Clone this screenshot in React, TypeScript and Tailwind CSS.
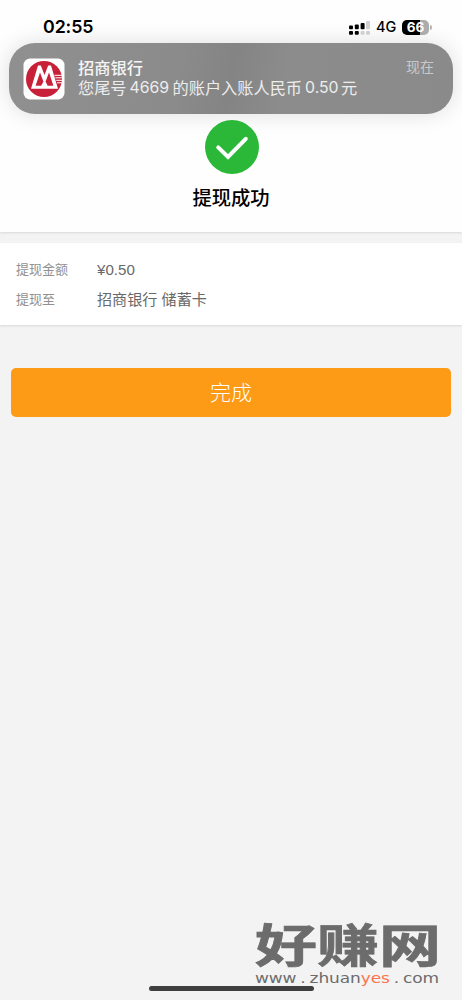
import type { ReactNode } from 'react';

function StatusBar() {
  return (
    <div className="flex h-[43px] items-start justify-between pl-[43px] pr-[30px] text-black">
      <span className="mt-[15px] h-6 w-[51px] whitespace-nowrap text-[17.8px] leading-6 font-semibold tracking-[-0.1px]">02:55</span>
      <div className="mt-[18px] flex h-[18px] items-center">
        <svg className="mr-[6px] h-[15px] w-[22px]" viewBox="0 0 22 15">
          <g fill="#000">
            <rect x="1" y="5.5" width="4" height="3.8" rx="1" />
            <rect x="6.8" y="4.5" width="4" height="4.8" rx="1" />
            <rect x="12.6" y="3" width="4" height="6.3" rx="1" />
            <rect x="1" y="11" width="4" height="3.8" rx="1" />
            <rect x="6.8" y="11" width="4" height="3.8" rx="1" />
          </g>
          <g fill="#d0d0d0">
            <rect x="18" y="1" width="4" height="8.3" rx="1" />
            <rect x="12.6" y="11" width="4" height="3.8" rx="1" />
            <rect x="18" y="11" width="4" height="3.8" rx="1" />
          </g>
        </svg>
        <span className="mr-[6px] w-5 whitespace-nowrap text-[14.5px] leading-[18px] font-medium">4G</span>
        <div className="flex h-[15px] w-[27px] items-center justify-center rounded-[5px] bg-[linear-gradient(to_right,#000_66%,#acacac_66%)] text-[13.5px] leading-[15px] font-bold text-white">
          66
        </div>
        <div className="ml-px h-[5px] w-[2px] rounded-r-full bg-[#b5b5b5]" />
      </div>
    </div>
  );
}

function BankLogo() {
  return (
    <svg className="h-[42px] w-[42px]" viewBox="0 0 42 42">
      <rect x="0.5" y="0.5" width="41" height="41" rx="6.5" fill="#fff" />
      <circle cx="21" cy="21" r="18" fill="#c9203a" />
      {/* twin peaks */}
      <path d="M8 30.8 15 7.5H17.8L21.5 17 25.2 7.5H28L35 30.8Z" fill="#fff" />
      <path d="M17 14.5 20.4 23.5 18.2 27.8H12.6Z" fill="#c9203a" />
      <path d="M26 14.5 30.4 27.8H24.6L22.6 23.5Z" fill="#c9203a" />
      <path d="M31.5 17.3H41M32.3 19.8H41M33.2 22.3H41M34 24.8H41" stroke="#fff" strokeWidth="1" />
    </svg>
  );
}

function Notification() {
  return (
    <div className="ml-[9px] flex h-[71px] w-[444px] rounded-[26px] bg-[linear-gradient(100deg,#909090_0%,#8b8b8b_38%,#848484_50%,#8c8c8c_62%,#8a8a8a_100%)] pl-[14px] pr-[19px] pt-[15px] shadow-[0_0_22px_rgba(0,0,0,0.13)]">
      <BankLogo />
      <div className="ml-[13px] flex-1 whitespace-nowrap">
        <div className="text-[16.3px] leading-[21px] font-medium text-[#f5f5f5]">招商银行</div>
        <div className="flex text-[16.2px] leading-[18px] text-[#ededed]">
          <span>您尾号</span>
          <span className="ml-[3px] mr-[3px] w-10 text-[15.8px]">4669</span>
          <span>的账户入账人民币</span>
          <span className="ml-[3px] mr-[2px] w-[34px] text-[15.8px]">0.50</span>
          <span>元</span>
        </div>
      </div>
      <span className="text-[14px] leading-[18px] text-[#c9c9c9]">现在</span>
    </div>
  );
}

function DetailRow({ label, children }: { label: string; children: ReactNode }) {
  return (
    <div className="flex h-[30px] items-center">
      <span className="w-[81px] text-[13px] text-[#919191]">{label}</span>
      <span className="font-['Liberation_Sans','Noto_Sans_CJK_SC',sans-serif] text-[15.1px] text-[#696969]">{children}</span>
    </div>
  );
}

function Watermark() {
  return (
    <div className="absolute left-[255px] top-[922px] w-[190px] whitespace-nowrap text-[#6c6c6c]">
      <div className="h-[49px] origin-top-left scale-y-[0.74] text-[62px] leading-[63px] font-bold [-webkit-text-stroke:1px_#6c6c6c]">好赚网</div>
      <div className="flex w-[160px] origin-left scale-x-[1.15] justify-between font-['DejaVu_Sans'] text-[14.8px] leading-[14px] tracking-[-0.1px]">
        <span>www</span>
        <span>.</span>
        <span>
          zhuan<span className="text-[#fa7650]">yes</span>
        </span>
        <span>.</span>
        <span>com</span>
      </div>
    </div>
  );
}

export default function App() {
  return (
    <div className="relative h-[1000px] w-[462px] overflow-hidden bg-[#f3f3f3] font-['Inter','Noto_Sans_CJK_SC',sans-serif]">
      <header className="h-[232px] bg-[#fefefe] shadow-[0_1px_2px_#d8d8d8]">
        <StatusBar />
        <Notification />
        <div className="flex flex-col items-center pt-[6px]">
          <svg className="ml-px h-[54px] w-[54px]" viewBox="0 0 54 54">
            <circle cx="27" cy="27" r="27" fill="#2bb838" />
            <path d="M13.2 27.3 23 37 40.8 18.8" fill="none" stroke="#fff" strokeWidth="4" strokeLinecap="round" />
          </svg>
          <h1 className="mt-[10px] text-[19.3px] leading-7 font-medium text-black">提现成功</h1>
        </div>
      </header>

      <section className="mt-[11px] h-[82px] bg-white pl-4 pt-3 shadow-[0_1px_2px_#d8d8d8]">
        <DetailRow label="提现金额">¥0.50</DetailRow>
        <DetailRow label="提现至">招商银行 储蓄卡</DetailRow>
      </section>

      <button className="ml-[11px] mt-[43px] block h-[49px] w-[440px] rounded-[5px] bg-[#fd9a16] text-[21px] font-light text-white">
        完成
      </button>

      <div className="absolute left-[149px] top-[986px] h-[5px] w-[165px] rounded-full bg-[#3f3f3f]" />
      <Watermark />
    </div>
  );
}
